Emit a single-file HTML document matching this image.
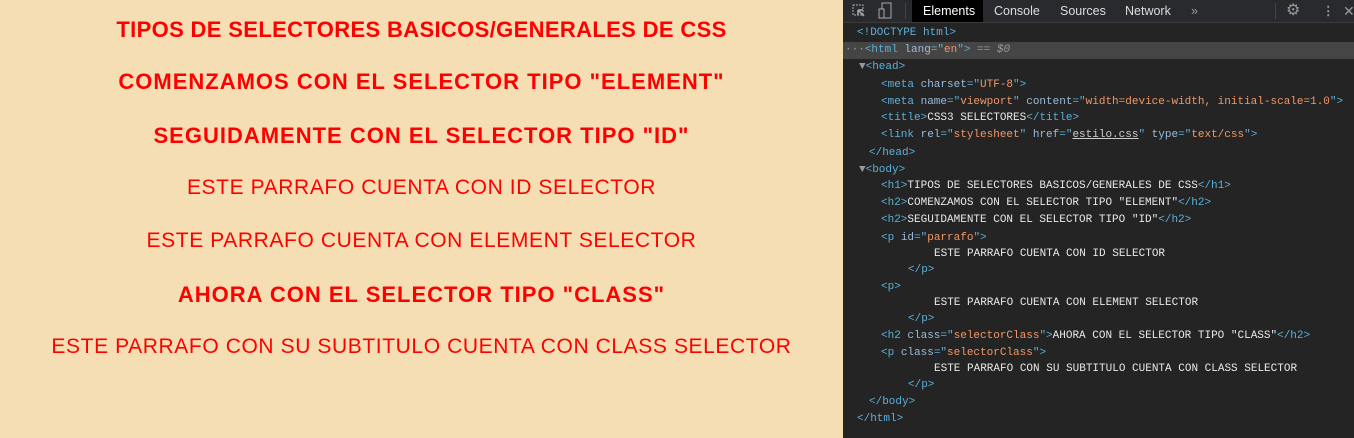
<!DOCTYPE html>
<html><head><style>
body{margin:0;width:1354px;height:438px;overflow:hidden;position:relative;background:#f5deb3;}
.l{position:absolute;left:0;width:843px;text-align:center;color:#f00;font-family:"Liberation Sans",sans-serif;white-space:nowrap;line-height:30px;}
.h1{font-size:22px;font-weight:bold;letter-spacing:0.35px}
.h2{font-size:22px;font-weight:bold;letter-spacing:1px}
.p{font-size:21px;letter-spacing:0.6px}
#dt{position:absolute;left:843px;top:0;width:511px;height:438px;background:#242424;font-family:"Liberation Mono",monospace;font-size:11px;}
#tb{height:22px;background:#292a2d;border-bottom:1px solid #3c3c3c;position:relative;font-family:"Liberation Sans",sans-serif;font-size:12.5px;color:#ddd}
#tb span{position:absolute;top:0;line-height:22px}
.ln{position:absolute;white-space:pre;color:#e8e8e8;line-height:16px}
.t{color:#5db0d7}.a{color:#9bbbdc}.v{color:#f29766}.g{color:#999}
</style></head><body>
<div class="l h1" style="top:15px">TIPOS DE SELECTORES BASICOS/GENERALES DE CSS</div>
<div class="l h2" style="top:67px">COMENZAMOS CON EL SELECTOR TIPO "ELEMENT"</div>
<div class="l h2" style="top:121px">SEGUIDAMENTE CON EL SELECTOR TIPO "ID"</div>
<div class="l p" style="top:173px">ESTE PARRAFO CUENTA CON ID SELECTOR</div>
<div class="l p" style="top:226px">ESTE PARRAFO CUENTA CON ELEMENT SELECTOR</div>
<div class="l h2" style="top:280px">AHORA CON EL SELECTOR TIPO "CLASS"</div>
<div class="l p" style="top:332px">ESTE PARRAFO CON SU SUBTITULO CUENTA CON CLASS SELECTOR</div>
<div id="dt">
<div id="tb">
<svg style="position:absolute;left:9px;top:4px" width="14" height="14"><rect x="1" y="1" width="10" height="10" fill="none" stroke="#aaa" stroke-dasharray="2 1"/><path d="M6 6l6 6M6 6v5M6 6h5" stroke="#aaa" stroke-width="1.5"/></svg>
<svg style="position:absolute;left:35px;top:2px" width="14" height="18"><rect x="4" y="1" width="9" height="15" fill="none" stroke="#aaa"/><rect x="1" y="7" width="5" height="9" fill="#292a2d" stroke="#aaa"/></svg>
<div style="position:absolute;left:62px;top:3px;width:1px;height:16px;background:#444"></div>
<div style="position:absolute;left:69px;top:0;width:71px;height:22px;background:#000"></div>
<span style="left:80px;color:#fff">Elements</span>
<span style="left:151px">Console</span>
<span style="left:217px">Sources</span>
<span style="left:282px">Network</span>
<span style="left:348px;color:#999">»</span>
<div style="position:absolute;left:432px;top:3px;width:1px;height:16px;background:#444"></div>
<span style="left:443px;color:#999;font-size:16px">⚙</span>
<span style="left:479px;color:#999;font-weight:bold">⋮</span>
<span style="left:500px;color:#999;font-size:14px">✕</span>
</div>
<div style="position:absolute;left:0;top:42px;width:511px;height:17px;background:#454545"></div>
<div class="ln" style="left:14px;top:25px"><span class="t">&lt;!DOCTYPE html&gt;</span></div>
<div class="ln" style="left:2px;top:42px"><span class="g">···</span><span class="t">&lt;html </span><span class="a">lang</span><span class="t">="</span><span class="v">en</span><span class="t">"&gt;</span><span class="g"> == <i>$0</i></span></div>
<div class="ln" style="left:16px;top:59px"><span class="g">▼</span><span class="t">&lt;head&gt;</span></div>
<div class="ln" style="left:38px;top:77px"><span class="t">&lt;meta </span><span class="a">charset</span><span class="t">="</span><span class="v">UTF-8</span><span class="t">"&gt;</span></div>
<div class="ln" style="left:38px;top:94px"><span class="t">&lt;meta </span><span class="a">name</span><span class="t">="</span><span class="v">viewport</span><span class="t">" </span><span class="a">content</span><span class="t">="</span><span class="v">width=device-width, initial-scale=1.0</span><span class="t">"&gt;</span></div>
<div class="ln" style="left:38px;top:110px"><span class="t">&lt;title&gt;</span>CSS3 SELECTORES<span class="t">&lt;/title&gt;</span></div>
<div class="ln" style="left:38px;top:127px"><span class="t">&lt;link </span><span class="a">rel</span><span class="t">="</span><span class="v">stylesheet</span><span class="t">" </span><span class="a">href</span><span class="t">="</span><span style="text-decoration:underline;color:#ccc">estilo.css</span><span class="t">" </span><span class="a">type</span><span class="t">="</span><span class="v">text/css</span><span class="t">"&gt;</span></div>
<div class="ln" style="left:26px;top:145px"><span class="t">&lt;/head&gt;</span></div>
<div class="ln" style="left:16px;top:162px"><span class="g">▼</span><span class="t">&lt;body&gt;</span></div>
<div class="ln" style="left:38px;top:178px"><span class="t">&lt;h1&gt;</span>TIPOS DE SELECTORES BASICOS/GENERALES DE CSS<span class="t">&lt;/h1&gt;</span></div>
<div class="ln" style="left:38px;top:195px"><span class="t">&lt;h2&gt;</span>COMENZAMOS CON EL SELECTOR TIPO "ELEMENT"<span class="t">&lt;/h2&gt;</span></div>
<div class="ln" style="left:38px;top:212px"><span class="t">&lt;h2&gt;</span>SEGUIDAMENTE CON EL SELECTOR TIPO "ID"<span class="t">&lt;/h2&gt;</span></div>
<div class="ln" style="left:38px;top:230px"><span class="t">&lt;p </span><span class="a">id</span><span class="t">="</span><span class="v">parrafo</span><span class="t">"&gt;</span></div>
<div class="ln" style="left:91px;top:246px">ESTE PARRAFO CUENTA CON ID SELECTOR</div>
<div class="ln" style="left:65px;top:262px"><span class="t">&lt;/p&gt;</span></div>
<div class="ln" style="left:38px;top:279px"><span class="t">&lt;p&gt;</span></div>
<div class="ln" style="left:91px;top:295px">ESTE PARRAFO CUENTA CON ELEMENT SELECTOR</div>
<div class="ln" style="left:65px;top:311px"><span class="t">&lt;/p&gt;</span></div>
<div class="ln" style="left:38px;top:328px"><span class="t">&lt;h2 </span><span class="a">class</span><span class="t">="</span><span class="v">selectorClass</span><span class="t">"&gt;</span>AHORA CON EL SELECTOR TIPO "CLASS"<span class="t">&lt;/h2&gt;</span></div>
<div class="ln" style="left:38px;top:345px"><span class="t">&lt;p </span><span class="a">class</span><span class="t">="</span><span class="v">selectorClass</span><span class="t">"&gt;</span></div>
<div class="ln" style="left:91px;top:361px">ESTE PARRAFO CON SU SUBTITULO CUENTA CON CLASS SELECTOR</div>
<div class="ln" style="left:65px;top:377px"><span class="t">&lt;/p&gt;</span></div>
<div class="ln" style="left:26px;top:394px"><span class="t">&lt;/body&gt;</span></div>
<div class="ln" style="left:14px;top:411px"><span class="t">&lt;/html&gt;</span></div>
</div>
</body></html>
